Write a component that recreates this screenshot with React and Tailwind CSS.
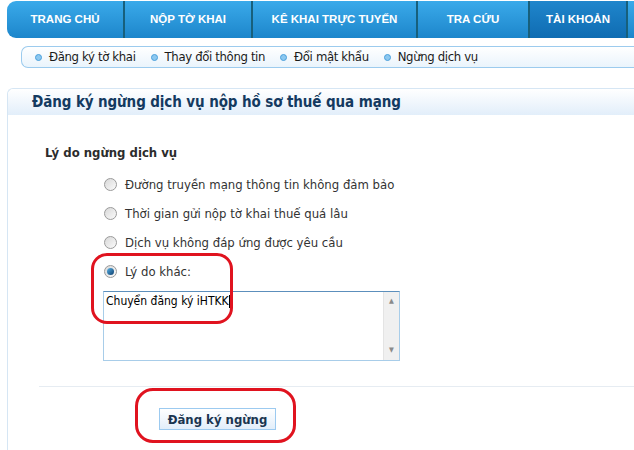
import React from "react";

const tabs = [
  { label: "TRANG CHỦ", w: "w-[118px]" },
  { label: "NỘP TỜ KHAI", w: "w-[128px]" },
  { label: "KÊ KHAI TRỰC TUYẾN", w: "w-[165px]" },
  { label: "TRA CỨU", w: "w-[112px]" },
  { label: "TÀI KHOẢN", w: "w-[98px]", active: true },
];

const subLinks = ["Đăng ký tờ khai", "Thay đổi thông tin", "Đổi mật khẩu", "Ngừng dịch vụ"];

const reasons = [
  "Đường truyền mạng thông tin không đảm bảo",
  "Thời gian gửi nộp tờ khai thuế quá lâu",
  "Dịch vụ không đáp ứng được yêu cầu",
];

function Radio({ checked }) {
  return (
    <span className="relative inline-block w-[13px] h-[13px] rounded-full border border-[#9a9a9a] bg-gradient-to-br from-[#d8d8d8] to-[#fbfbfb] shrink-0">
      {checked && (
        <span className="absolute left-[2px] top-[2px] w-[7px] h-[7px] rounded-full bg-gradient-to-br from-[#5ab4e8] to-[#0d3f6e]" />
      )}
    </span>
  );
}

export default function App() {
  return (
    <div
      className="relative w-[634px] h-[450px] overflow-hidden bg-white"
      style={{ fontFamily: '"DejaVu Sans Condensed", "DejaVu Sans", sans-serif' }}
    >
      {/* top navigation */}
      <div className="ml-[7px] mt-[1px] h-[37px] flex rounded-l-[9px] overflow-hidden bg-gradient-to-b from-[#3aaaea] to-[#1c86cb]">
        {tabs.map((t) => (
          <div
            key={t.label}
            className={`${t.w} h-full flex items-center justify-center border-r-2 border-[#17607c] text-white font-bold text-[11.5px] ${
              t.active ? "bg-gradient-to-b from-[#1f86cc] to-[#0f6cb2]" : ""
            }`}
            style={{ fontFamily: '"Liberation Sans", Arial, sans-serif' }}
          >
            {t.label}
          </div>
        ))}
        <div className="flex-1" />
      </div>

      {/* sub navigation */}
      <div className="ml-[21px] mt-[8px] h-[22px] flex items-center gap-[15px] pl-[13px] border border-r-0 border-[#9ccbee] rounded-l-[7px] bg-gradient-to-b from-white to-[#eaf4fc] text-[13px] tracking-[-0.35px] text-[#1a1a1a]">
        {subLinks.map((s) => (
          <div key={s} className="flex items-center gap-[7px]">
            <span className="w-[7px] h-[7px] rounded-full bg-[#8cc8f0] border border-[#4aa0dc]" />
            <span>{s}</span>
          </div>
        ))}
      </div>

      {/* panel */}
      <div className="ml-[7px] mt-[20px] border-l border-t border-[#d6e6f4] rounded-tl-[6px] h-[400px]">
        <div className="h-[26px] flex items-center pl-[24px] bg-gradient-to-b from-white to-[#e2eefa] rounded-tl-[6px]">
          <h1 className="text-[15px] font-bold text-[#143a60] tracking-[-0.1px]">
            Đăng ký ngừng dịch vụ nộp hồ sơ thuế qua mạng
          </h1>
        </div>

        <div className="pl-[37px] pt-[28px] text-[13px] font-bold text-[#2c2c2c]">Lý do ngừng dịch vụ</div>

        <div className="pl-[96px] pt-[14px] flex flex-col gap-[13px] text-[13px] text-[#333]">
          {reasons.map((r) => (
            <label key={r} className="flex items-center gap-[8px] h-[16px]">
              <Radio />
              <span>{r}</span>
            </label>
          ))}
          <label className="flex items-center gap-[8px] h-[16px]">
            <Radio checked />
            <span>Lý do khác:</span>
          </label>
        </div>

        <div className="ml-[95px] mt-[11px] w-[297px] h-[70px] flex border border-[#a8cde9] border-t-[#5c8fbc] bg-white">
          <div className="flex-1 pl-[2px] pt-[1px] text-[12px] text-black leading-[16px]">
            Chuyển đăng ký iHTKK<span className="inline-block w-px h-[13px] bg-black align-middle" />
          </div>
          <div className="w-[16px] bg-[#f0f0f0] border-l border-[#e4e4e4] flex flex-col justify-between items-center py-[4px] text-[7px] text-[#8a8a8a]">
            <span>▲</span>
            <span>▼</span>
          </div>
        </div>

        <div className="ml-[31px] mt-[25px] h-px bg-[#e6ecf2]" />

        <div className="ml-[151px] mt-[20px]">
          <button className="w-[117px] h-[22px] border border-[#9ccaf0] bg-gradient-to-b from-white to-[#e2eefa] text-[13px] font-bold text-[#1a3550]">
            Đăng ký ngừng
          </button>
        </div>
      </div>

      {/* red annotation marks */}
      <div className="absolute left-[91px] top-[253px] w-[142px] h-[71px] border-[3px] border-[#e0131f] rounded-[16px]" />
      <div className="absolute left-[135px] top-[388px] w-[161px] h-[55px] border-[3px] border-[#e0131f] rounded-[18px]" />
    </div>
  );
}
